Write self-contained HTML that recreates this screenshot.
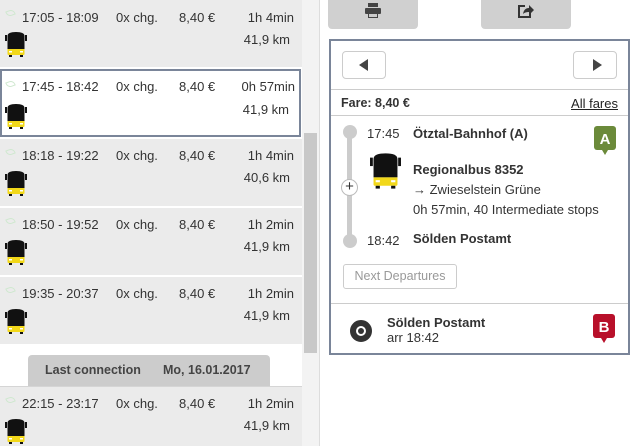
<!DOCTYPE html>
<html><head><meta charset="utf-8"><style>
*{margin:0;padding:0;box-sizing:border-box}
body{width:634px;height:446px;overflow:hidden;background:#fff;font-family:"Liberation Sans",Arial,sans-serif;font-size:13px;color:#333;position:relative}
.a{position:absolute}
.row{position:absolute;left:0;width:302px;background:#ebebeb}
.row.sel{background:#fff;border:2px solid #7a8599;width:301px}
.row span{position:absolute;white-space:nowrap}
.leaf{position:absolute;left:6px;top:10px;width:9px;height:6px;border:1px solid #cfe8cf;border-radius:0 5px 0 5px;transform:rotate(-20deg)}
.bus{position:absolute;left:5px;width:22px;height:27px}
.b{font-weight:bold}
</style></head><body>

<svg width="0" height="0" style="position:absolute"><defs>
<symbol id="bus" viewBox="0 0 22 27">
<rect x="0" y="4" width="2" height="6" fill="#111"/><rect x="20" y="4" width="2" height="6" fill="#111"/>
<path d="M2.5 5 Q2.5 1 11 1 Q19.5 1 19.5 5 L19.5 18 L2.5 18 Z" fill="#111"/>
<path d="M2.5 18 L19.5 18 L19.5 23 Q19.5 24 18.5 24 L3.5 24 Q2.5 24 2.5 23 Z" fill="#f2d81a"/>
<rect x="4" y="20" width="3" height="1.5" fill="#fff"/><rect x="15" y="20" width="3" height="1.5" fill="#fff"/>
<rect x="4" y="24" width="3" height="2" fill="#111"/><rect x="15" y="24" width="3" height="2" fill="#111"/>
</symbol></defs></svg>

<div class="row" style="top:0;height:67px">
<div class="leaf"></div><span style="left:22px;top:10px">17:05 - 18:09</span><span style="left:116px;top:10px">0x chg.</span><span style="left:179px;top:10px">8,40 €</span><span style="right:8px;top:10px">1h 4min</span><span style="right:12px;top:32px">41,9 km</span>
<svg class="bus" style="top:31px"><use href="#bus"/></svg></div>
<div class="row sel" style="top:69px;height:68px">
<div class="leaf" style="left:4px"></div><span style="left:20px;top:8px">17:45 - 18:42</span><span style="left:114px;top:8px">0x chg.</span><span style="left:177px;top:8px">8,40 €</span><span style="right:4px;top:8px">0h 57min</span><span style="right:10px;top:31px">41,9 km</span>
<svg class="bus" style="top:32px;left:3px"><use href="#bus"/></svg></div>
<div class="row" style="top:139px;height:67px">
<div class="leaf"></div><span style="left:22px;top:9px">18:18 - 19:22</span><span style="left:116px;top:9px">0x chg.</span><span style="left:179px;top:9px">8,40 €</span><span style="right:8px;top:9px">1h 4min</span><span style="right:12px;top:31px">40,6 km</span>
<svg class="bus" style="top:31px"><use href="#bus"/></svg></div>
<div class="row" style="top:208px;height:67px">
<div class="leaf"></div><span style="left:22px;top:9px">18:50 - 19:52</span><span style="left:116px;top:9px">0x chg.</span><span style="left:179px;top:9px">8,40 €</span><span style="right:8px;top:9px">1h 2min</span><span style="right:12px;top:31px">41,9 km</span>
<svg class="bus" style="top:31px"><use href="#bus"/></svg></div>
<div class="row" style="top:277px;height:67px">
<div class="leaf"></div><span style="left:22px;top:9px">19:35 - 20:37</span><span style="left:116px;top:9px">0x chg.</span><span style="left:179px;top:9px">8,40 €</span><span style="right:8px;top:9px">1h 2min</span><span style="right:12px;top:31px">41,9 km</span>
<svg class="bus" style="top:31px"><use href="#bus"/></svg></div>
<div class="a b" style="left:28px;top:355px;width:242px;height:31px;background:#ccc;border-radius:4px 4px 0 0;font-size:12.5px;color:#444">
<span class="a" style="left:17px;top:8px">Last connection</span><span class="a" style="left:135px;top:8px">Mo, 16.01.2017</span></div>
<div class="row" style="top:386px;height:60px;border-top:1px solid #d5d5d5">
<div class="leaf"></div><span style="left:22px;top:9px">22:15 - 23:17</span><span style="left:116px;top:9px">0x chg.</span><span style="left:179px;top:9px">8,40 €</span><span style="right:8px;top:9px">1h 2min</span><span style="right:12px;top:31px">41,9 km</span>
<svg class="bus" style="top:31px"><use href="#bus"/></svg></div>

<div class="a" style="left:302px;top:0;width:17px;height:446px;background:#f3f3f3"></div>
<div class="a" style="left:304px;top:133px;width:13px;height:220px;background:#c8c8c8"></div>
<div class="a" style="left:319px;top:0;width:1px;height:446px;background:#ddd"></div>

<div class="a" style="left:328px;top:0;width:90px;height:29px;background:#d0d0d0;border-radius:0 0 4px 4px"></div>
<svg class="a" style="left:364px;top:3px" width="18" height="16" viewBox="0 0 18 16"><rect x="4" y="0" width="10" height="4" fill="#444"/><rect x="1" y="5" width="16" height="6" rx="1" fill="#444"/><rect x="4" y="10" width="10" height="5" fill="#444"/><rect x="5" y="11" width="8" height="3" fill="#ccc"/></svg>
<div class="a" style="left:481px;top:0;width:90px;height:29px;background:#d0d0d0;border-radius:0 0 4px 4px"></div>
<svg class="a" style="left:517px;top:2px" width="18" height="17" viewBox="0 0 18 17"><path d="M1 3 H8 V5 H3 V14 H12 V10 H14 V16 H1 Z" fill="#333"/><path d="M6 12 Q7 6 12 6 V3 L17 8 L12 13 V10 Q8 10 6 12 Z" fill="#333"/></svg>

<div class="a" style="left:329px;top:39px;width:301px;height:316px;border:2px solid #7a8599;background:#fff">
<div class="a" style="left:11px;top:10px;width:44px;height:28px;border:1px solid #ccc;border-radius:4px"></div>
<div class="a" style="left:28px;top:18px;border-right:9px solid #444;border-top:6px solid transparent;border-bottom:6px solid transparent"></div>
<div class="a" style="left:242px;top:10px;width:44px;height:28px;border:1px solid #ccc;border-radius:4px"></div>
<div class="a" style="left:262px;top:18px;border-left:9px solid #444;border-top:6px solid transparent;border-bottom:6px solid transparent"></div>
<div class="a" style="left:0;top:48px;width:297px;height:1px;background:#ccc"></div>
<div class="a b" style="left:10px;top:55px;font-size:12.5px">Fare: 8,40 €</div>
<div class="a" style="right:10px;top:55px;text-decoration:underline;color:#222">All fares</div>
<div class="a" style="left:0;top:74px;width:297px;height:1px;background:#ccc"></div>
<div class="a" style="left:16px;top:88px;width:5px;height:114px;background:#ccc"></div>
<div class="a" style="left:12px;top:84px;width:14px;height:14px;border-radius:50%;background:#ccc"></div>
<div class="a" style="left:12px;top:193px;width:14px;height:14px;border-radius:50%;background:#ccc"></div>
<div class="a" style="left:10px;top:138px;width:17px;height:17px;border-radius:50%;background:#fff;border:1px solid #bbb;text-align:center;line-height:14px;font-size:15px;color:#333">+</div>
<div class="a" style="left:36px;top:85px">17:45</div>
<div class="a b" style="left:82px;top:85px">Ötztal-Bahnhof (A)</div>
<svg class="a" style="left:263px;top:85px" width="22" height="30" viewBox="0 0 22 30"><rect x="0" y="0" width="22" height="24" rx="3" fill="#6b8a3a"/><path d="M8 24 L11 29 L14 24 Z" fill="#6b8a3a"/><text x="11" y="18" text-anchor="middle" font-family="Liberation Sans" font-weight="bold" font-size="15" fill="#fff">A</text></svg>
<svg class="a" style="left:39px;top:111px;width:31px;height:38px" viewBox="0 0 22 27"><use href="#bus"/></svg>
<div class="a b" style="left:82px;top:121px">Regionalbus 8352</div>
<div class="a" style="left:82px;top:141px">→ Zwieselstein Grüne</div>
<div class="a" style="left:82px;top:161px">0h 57min, 40 Intermediate stops</div>
<div class="a" style="left:36px;top:192px">18:42</div>
<div class="a b" style="left:82px;top:190px">Sölden Postamt</div>
<div class="a" style="left:12px;top:223px;width:114px;height:25px;border:1px solid #ccc;border-radius:3px;color:#999;text-align:center;line-height:23px;font-size:12.5px">Next Departures</div>
<div class="a" style="left:0;top:262px;width:297px;height:1px;background:#ccc"></div>
<div class="a" style="left:19px;top:279px;width:22px;height:22px;border-radius:50%;border:6px solid #333"></div>
<div class="a" style="left:27px;top:287px;width:6px;height:6px;border-radius:50%;background:#333"></div>
<div class="a b" style="left:56px;top:274px">Sölden Postamt</div>
<div class="a" style="left:56px;top:289px">arr 18:42</div>
<svg class="a" style="left:262px;top:273px" width="22" height="30" viewBox="0 0 22 30"><rect x="0" y="0" width="22" height="24" rx="3" fill="#b8102a"/><path d="M8 24 L11 29 L14 24 Z" fill="#b8102a"/><text x="11" y="18" text-anchor="middle" font-family="Liberation Sans" font-weight="bold" font-size="15" fill="#fff">B</text></svg>
</div>
</body></html>
